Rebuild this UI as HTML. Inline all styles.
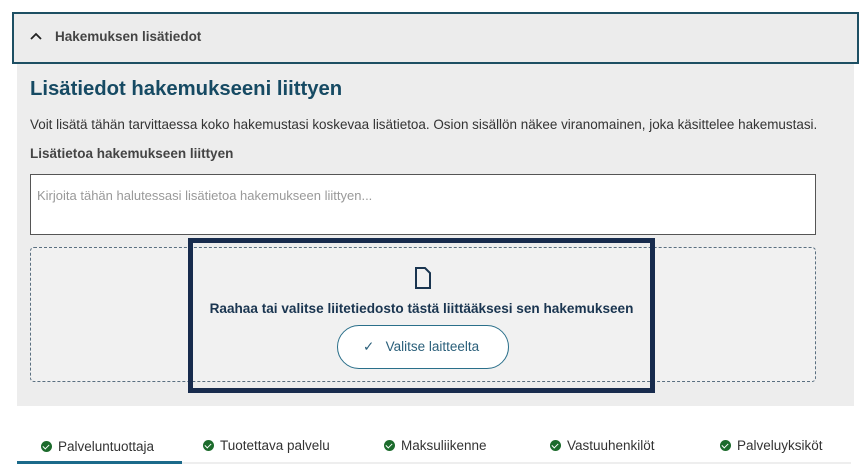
<!DOCTYPE html><html><head><style>
body{margin:0;width:868px;height:474px;background:#fff;font-family:"Liberation Sans",sans-serif;position:relative;overflow:hidden}
.a{position:absolute}
.t{position:absolute;white-space:nowrap;top:-1px}
.c{display:inline-block;width:11px;height:11px;border-radius:50%;background:#1c6b2c;vertical-align:-1px;margin-right:6px;position:relative}
.c:after{content:"";position:absolute;left:3px;top:2px;width:3px;height:5px;border:solid #fff;border-width:0 1.5px 1.5px 0;transform:rotate(45deg)}
</style></head><body>
<div class="a" style="left:17px;top:60px;width:837px;height:346px;background:#ededed"></div>
<div class="a" style="left:12px;top:12px;width:843px;height:48px;border:2px solid #1d4f63;background:#ececec"></div>
<svg class="a" style="left:30px;top:32px" width="12" height="9"><path d="M1 7 L6 2 L11 7" fill="none" stroke="#222" stroke-width="1.8"/></svg>
<div class="a" style="left:55px;top:29px;font-size:13.5px;font-weight:bold;color:#444">Hakemuksen lisätiedot</div>
<div class="a" style="left:30px;top:78px;font-size:20.3px;font-weight:bold;color:#164a63">Lisätiedot hakemukseeni liittyen</div>
<div class="a" style="left:30px;top:117px;font-size:13.45px;color:#333">Voit lisätä tähän tarvittaessa koko hakemustasi koskevaa lisätietoa. Osion sisällön näkee viranomainen, joka käsittelee hakemustasi.</div>
<div class="a" style="left:30px;top:146px;font-size:13.5px;font-weight:bold;color:#444">Lisätietoa hakemukseen liittyen</div>
<div class="a" style="left:30px;top:174px;width:784px;height:59px;border:1px solid #555;background:#fff"></div>
<div class="a" style="left:37px;top:188px;font-size:13px;color:#999">Kirjoita tähän halutessasi lisätietoa hakemukseen liittyen...</div>
<div class="a" style="left:30px;top:247px;width:784px;height:133px;border:1px dashed #5a6f80;border-radius:4px;background:#f1f1f1"></div>
<div class="a" style="left:188px;top:238px;width:457px;height:145px;border:5px solid #172b4d"></div>
<svg class="a" style="left:414px;top:266px" width="18" height="24"><path d="M2 2 H11 L16 7 V22 H2 Z" fill="none" stroke="#1a3550" stroke-width="2"/></svg>
<div class="a" style="left:188px;top:301px;width:467px;text-align:center;font-size:13.6px;font-weight:bold;color:#1a3550">Raahaa tai valitse liitetiedosto tästä liittääksesi sen hakemukseen</div>
<div class="a" style="left:337px;top:325px;width:170px;height:42px;border:1.5px solid #2a6f8a;border-radius:22px;background:#fff"></div>
<div class="a" style="left:363px;top:339px;font-size:13.5px;color:#2a5f7a">✓&nbsp;&nbsp;&nbsp;Valitse laitteelta</div>
<div class="a" style="left:17px;top:462px;width:834px;height:2px;background:#eee"></div>
<div class="a" style="left:17px;top:461px;width:165px;height:3px;background:#1b6a8a"></div>
<div class="a" style="top:439px;left:0;width:868px;font-size:13.5px;color:#333">
<span class="t" style="left:41px;top:0"><i class="c"></i>Palveluntuottaja</span>
<span class="t" style="left:203px"><i class="c"></i>Tuotettava palvelu</span>
<span class="t" style="left:384px"><i class="c"></i>Maksuliikenne</span>
<span class="t" style="left:550px"><i class="c"></i>Vastuuhenkilöt</span>
<span class="t" style="left:720px"><i class="c"></i>Palveluyksiköt</span>
</div>
</body></html>
